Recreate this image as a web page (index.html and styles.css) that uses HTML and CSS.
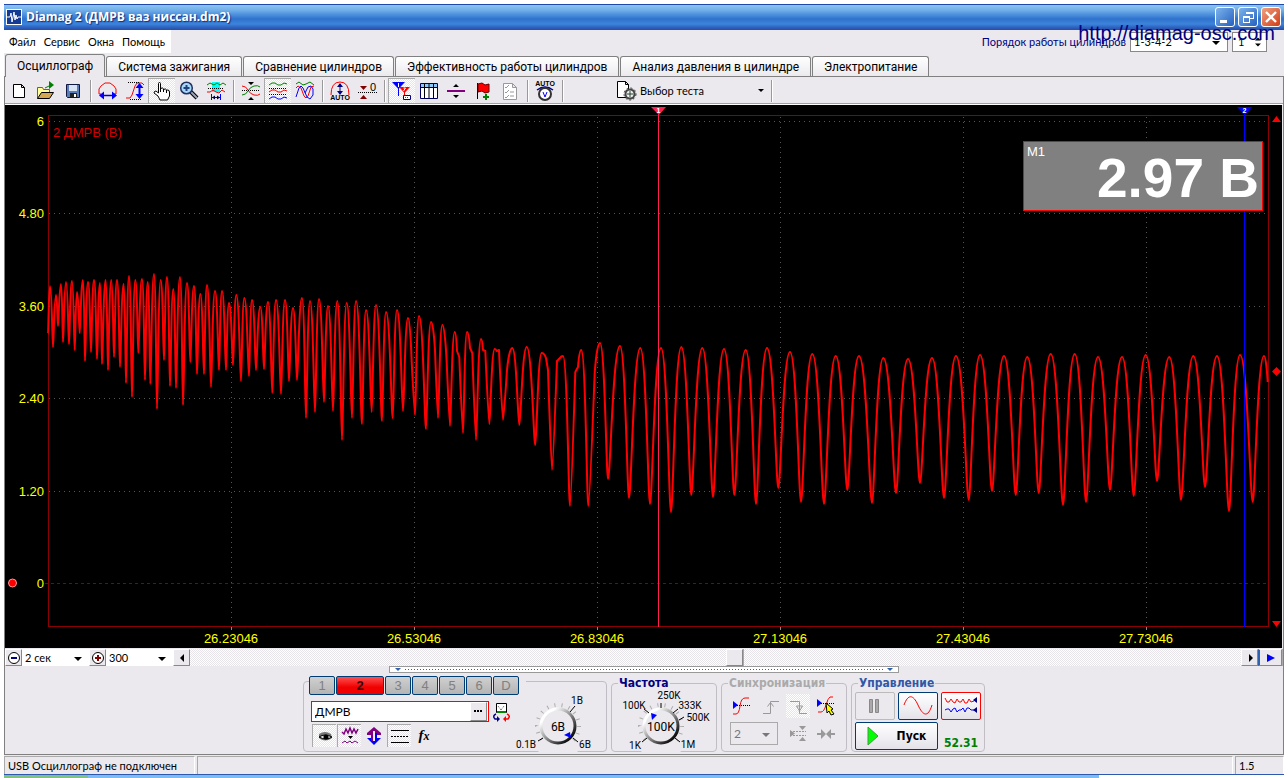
FILE: index.html
```html
<!DOCTYPE html>
<html lang="ru">
<head>
<meta charset="utf-8">
<title>Diamag 2</title>
<link rel="stylesheet" href="styles.css">
</head>
<body>
<div class="window">
  <header class="titlebar">
    <svg class="app-icon" width="16" height="16" viewBox="0 0 16 16"><rect width="16" height="16" fill="#fff"/><rect x="1" y="1" width="14" height="14" fill="#143a94"/><path d="M1 8h3l1-4 1 9 2-10 1 8 1-5 1 4 1-2h3" fill="none" stroke="#fff"/></svg>
    <h1 class="title">Diamag 2 (ДМРВ ваз ниссан.dm2)</h1>
    <div class="win-buttons">
      <button class="win-btn" aria-label="Свернуть"><svg width="18" height="18"><path d="M4 12h7v3H4z" fill="#fff"/></svg></button>
      <button class="win-btn" aria-label="Восстановить"><svg width="18" height="18" fill="none" stroke="#fff" shape-rendering="crispEdges"><path d="M7 6V4h7v6h-3M7 5h7M4.500 8h6v6h-6zM4 9h7"/></svg></button>
      <button class="win-btn close" aria-label="Закрыть"><svg width="18" height="18"><path d="M4 4l10 10M14 4L4 14" stroke="#fff" stroke-width="2.400"/></svg></button>
    </div>
  </header>

  <div class="menu-row">
    <nav class="menu"><button>Файл</button><button>Сервис</button><button>Окна</button><button>Помощь</button></nav>
    <div class="order">
      <label for="order">Порядок работы цилиндров</label>
      <span class="combo order-combo"><select id="order"><option>1-3-4-2</option></select></span>
      <span class="spin"><input aria-label="Номер цилиндра" value="1"><svg width="8" height="14" viewBox="0 0 8 14"><path d="M0 5l4-4 4 4zM0 9h8l-4 4z"/></svg></span>
    </div>
    <a class="watermark" href="#">http://diamag-osc.com</a>
  </div>

  <nav class="tabs">
    <button class="tab active">Осциллограф</button><button class="tab">Система зажигания</button><button class="tab">Сравнение цилиндров</button><button class="tab">Эффективность работы цилиндров</button><button class="tab">Анализ давления в цилиндре</button><button class="tab">Электропитание</button>
  </nav>

  <main class="panel">
    <div class="toolbar">
      <button class="tool" aria-label="Новый"><svg viewBox="0 0 22 22"><path d="M5.500 4.500h8l3 3v10h-11zM13.500 4.500v3h3" fill="#fff" stroke="#000"/></svg></button>
      <button class="tool" aria-label="Открыть"><svg viewBox="0 0 22 22"><path d="M2.500 18.500v-11h5l1 2h6v3" fill="#ffff9c" stroke="#806000"/><path d="M2.500 18.500l4-6h12l-4 6z" fill="#d4a850" stroke="#000"/><path d="M10 8l4-2" stroke="#008000"/><path d="M14 1l5 4-5 4z" fill="#008000"/></svg></button>
      <button class="tool" aria-label="Сохранить"><svg viewBox="0 0 22 22"><path d="M4.500 4.500h13v13h-12l-1-1z" fill="#5a7cb8" stroke="#101840"/><path d="M7 5h8v6H7z" fill="#d8e4f4"/><path d="M8 13h7v4H8z" fill="#222"/><path d="M12 14h2v3h-2z" fill="#fff"/></svg></button>
      <i class="sep"></i>
      <button class="tool" aria-label="Масштаб по времени"><svg viewBox="0 0 22 22" fill="none"><path d="M4 16V14H2V9l2-3 4-3h5l4 3 2 3v5h-2v2" stroke="#f00"/><path d="M4 15.500h14" stroke="#00c" stroke-width="1.500"/><path d="M2 15.500l5-4v8zM20 15.500l-5-4v8z" fill="#00f"/></svg></button>
      <button class="tool" aria-label="Масштаб по амплитуде"><svg viewBox="0 0 22 22" fill="none"><path d="M2 18h4l2-3 3-9 2-3h5l2 2" stroke="#f00"/><path d="M4 2.500h12M6 19.500h12" stroke="#000" stroke-dasharray="1 1"/><path d="M15.500 5v12" stroke="#00f" stroke-width="2"/><path d="M15.500 3l4 5h-8zM15.500 19l4-5h-8z" fill="#00f"/></svg></button>
      <button class="tool pressed" aria-label="Рука"><svg viewBox="0 0 22 22"><path d="M7.500 11V3.500q0-1 1-1t1 1V9q0-1 2-1 1 0 1 2 0-1 2-1 1 0 1 2 0-1 1-1 2 0 2 2v4l-2 4H9l-2-4-4-3q0-2 2-2l2.500 2zM9.500 9v3M12.500 9v3M15.500 10v3" fill="#fff" stroke="#000"/></svg></button>
      <button class="tool" aria-label="Лупа"><svg viewBox="0 0 22 22"><path d="M13 12l6 6" stroke="#000" stroke-width="4"/><path d="M13 12l6 6" stroke="#9aa4b8" stroke-width="2"/><circle cx="8.500" cy="8" r="5.800" fill="#a8d8f8" stroke="#203060" stroke-width="1.500"/><path d="M5.500 8h6M8.500 5v6" stroke="#204080" stroke-width="2"/></svg></button>
      <button class="tool" aria-label="Выделение"><svg viewBox="0 0 22 22" fill="none"><path d="M7 2h8v10H7z" fill="#0ff"/><path d="M2 5l3-2 4 2 3-2 3 2 3-2 3 2" stroke="#008000"/><path d="M3 8.500h16" stroke="#000" stroke-dasharray="1 1"/><path d="M2 12h3l3-2 3 2 3 1 3-3 3 2" stroke="#f00"/><path d="M7 17.500h8M6.500 14v6M15.500 14v6" stroke="#00f"/><path d="M7 17.500l3-2v4zM15 17.500l-3-2v4z" fill="#004"/></svg></button>
      <i class="sep"></i>
      <button class="tool" aria-label="Совместить"><svg viewBox="0 0 22 22" fill="none"><path d="M2 6q4 0 6 4t6 5 6-1" stroke="#f00"/><path d="M2 15q4 0 6-4t6-5 6 1" stroke="#008000"/><path d="M2 10.500h18" stroke="#000" stroke-dasharray="1 1"/><path d="M8 2h6l-3 3zM8 20h6l-3-3z" fill="#000"/></svg></button>
      <button class="tool pressed" aria-label="Раздельно"><svg viewBox="0 0 22 22" fill="none"><path d="M2 5l3-2h3l3 2h3l3-2 3 1" stroke="#008000"/><path d="M2 8.500h18M2 14.500h18" stroke="#000" stroke-dasharray="1 1"/><path d="M2 12l3-2h3l3 2h3l3-2 3 1" stroke="#f00"/><path d="M2 19l3-2h3l3 2h3l3-2 3 1" stroke="#00f"/></svg></button>
      <button class="tool" aria-label="Наложение"><svg viewBox="0 0 22 22" fill="none"><path d="M2 4l3-2 4 3 3-1 4-2 4 3" stroke="#008000"/><path d="M2 17l3-9 2-2 2 2 4 9 3 2 3-4V9l-2-3-3 1-3 6" stroke="#00f"/><path d="M2 8l2-2 3 2 3 8 2 2 2-2 3-9 3-1" stroke="#f00"/></svg></button>
      <i class="sep"></i>
      <button class="tool" aria-label="Авто"><svg viewBox="0 0 22 22" fill="none"><path d="M2 15q0-13 9-13t9 13" stroke="#f00"/><path d="M11 4v9" stroke="#000080"/><path d="M8 7l3-4 3 4zM8 11l3 4 3-4z" fill="#000080"/><text x="11" y="20" class="mini">AUTO</text></svg></button>
      <button class="tool" aria-label="Ноль"><svg viewBox="0 0 22 22"><path d="M4 6h7l-3.500 4zM4 19h7l-3.500-4z" fill="#800000"/><path d="M2 12.500h19" stroke="#000" stroke-dasharray="1 1"/><text x="17" y="11" class="zero">0</text></svg></button>
      <i class="sep"></i>
      <button class="tool pressed" aria-label="Маркеры"><svg viewBox="0 0 22 22"><path d="M1 2h13l-6.500 7zM7 7h1v9H7z" fill="#00f"/><path d="M8 7h11l-5.500 6zM13 12h1v7h-1z" fill="#f00"/><path d="M7.500 3v4M12.500 8h2l-2 3" stroke="#fff" fill="none"/><path d="M12.500 15.500h7v4h-7z" fill="#fff" stroke="#000080"/><path d="M14 17.500h4" stroke="#44a" stroke-dasharray="1 1"/></svg></button>
      <button class="tool" aria-label="Таблица"><svg viewBox="0 0 22 22"><path d="M2.500 3.500h17v15h-17z" fill="#fff" stroke="#000060"/><path d="M3 4h16v3H3z" fill="#8cc8f8"/><path d="M3 7.500h16M6.500 4v14M11 4v14M15.500 4v14" stroke="#000"/></svg></button>
      <button class="tool" aria-label="Уровень"><svg viewBox="0 0 22 22"><path d="M2 10h18v2H2z" fill="#800080"/><path d="M8 7l3-3 3 3zM8 15h6l-3 3z"/></svg></button>
      <button class="tool" aria-label="Добавить метку"><svg viewBox="0 0 22 22"><path d="M5.500 3v16" stroke="#000"/><path d="M6 4l4-1 3 2 4-1v8l-4 1-3-2-4 1z" fill="#f00" stroke="#600"/><path d="M11 17h6M14 14v6" stroke="#008000" stroke-width="2"/></svg></button>
      <button class="tool" aria-label="Список"><svg viewBox="0 0 22 22" fill="none" stroke="#999"><path d="M4.500 3.500h9l4 4v12h-13zM13.500 3.500v4h4" fill="#fff"/><path d="M6 7l1 1 3-3M6 12l1 1 3-3M6 17l1 1 3-3M11 12h4M11 16h4"/></svg></button>
      <i class="sep"></i>
      <button class="tool" aria-label="Авто напряжение"><svg viewBox="0 0 22 22"><text x="11" y="6" class="mini">AUTO</text><path d="M3 10q8-6 16 0" fill="none" stroke="#008" stroke-width="1.500"/><circle cx="11" cy="14" r="6" fill="#fff" stroke="#333" stroke-width="2"/><path d="M9 12l2 5 2-5" fill="none" stroke="#00f"/></svg></button>
      <i class="sep"></i>
      <button class="test-select"><svg width="21" height="21" viewBox="0 0 21 21"><path d="M1.500 1.500h8l3 3v13h-11zM9.500 1.500v3h3" fill="#fff" stroke="#000"/><circle cx="14" cy="14" r="4.500" fill="#eee" stroke="#444" stroke-width="2"/><circle cx="14" cy="14" r="6" fill="none" stroke="#333" stroke-dasharray="2 2"/><path d="M11 14h6M14 11v6" stroke="#243"/></svg><span>Выбор теста</span><svg width="6" height="4"><path d="M0 0h6L3 3z"/></svg></button>
      <i class="sep"></i>
    </div>

    <section class="chart">
      <svg class="scope" viewBox="5 105 1277 543" role="img" aria-label="Осциллограмма ДМРВ">
        <rect x="5" y="105" width="1277" height="543" fill="#000"/>
        <g class="grid">
          <path d="M49 121.500H1267M49 213.500H1267M49 306.500H1267M49 398.500H1267M49 491.500H1267"/>
          <path d="M231.500 117V626M414.500 117V626M597.500 117V626M780.500 117V626M963.500 117V626M1146.500 117V626"/>
        </g>
        <path d="M45 583.500H1267" stroke="#8b0000" stroke-dasharray="3 3" shape-rendering="crispEdges"/>
        <path d="M231.500 627v3M414.500 627v3M597.500 627v3M780.500 627v3M963.500 627v3M1146.500 627v3" stroke="#888"/>
        <rect x="48.500" y="115.500" width="1220" height="511" fill="none" stroke="#8b0000"/>
        <path id="trace" class="trace"/>
        <path d="M658.500 114V627" stroke="#ff2050"/>
        <path d="M651 107h15l-7 8z" fill="#ff2050"/>
        <path d="M1244.500 114V627" stroke="#00f"/>
        <path d="M1237 107h15l-7 8z" fill="#00f"/>
        <text x="658.500" y="113" class="marker-no">1</text><text x="1244.500" y="113" class="marker-no">2</text>
        <path d="M1272 122h9l-4.500-6zM1272 621h9l-4.500 6zM1272 371.500l4.500-4.500 4.500 4.500-4.500 4.500z" fill="#f00"/>
        <circle cx="12.500" cy="583" r="4" fill="#f00" stroke="#f99"/>
        <text x="53" y="137" class="channel-name">2 ДМРВ (В)</text>
        <g class="axis y-axis"><text x="44" y="126">6</text><text x="44" y="218">4.80</text><text x="44" y="311">3.60</text><text x="44" y="403">2.40</text><text x="44" y="496">1.20</text><text x="44" y="588">0</text></g>
        <g class="axis x-axis"><text x="231" y="643">26.23046</text><text x="414" y="643">26.53046</text><text x="597" y="643">26.83046</text><text x="780" y="643">27.13046</text><text x="963" y="643">27.43046</text><text x="1146" y="643">27.73046</text></g>
      </svg>
      <div class="readout"><span class="readout-name">М1</span><strong>2.97 В</strong></div>
    </section>

    <div class="scroll-row">
      <button class="mini-btn" aria-label="Уменьшить"><svg width="14" height="14"><circle cx="7" cy="7" r="5.500" fill="#fff" stroke="#000"/><path d="M4 7h6" stroke="#000080" stroke-width="2"/></svg></button>
      <span class="combo flat"><select aria-label="Развертка"><option>2 сек</option></select></span>
      <button class="mini-btn" aria-label="Увеличить"><svg width="14" height="14"><circle cx="7" cy="7" r="5.500" fill="#fff" stroke="#000"/><path d="M4 7h6M7 4v6" stroke="#800000" stroke-width="2"/></svg></button>
      <span class="combo flat"><select aria-label="Масштаб"><option>300</option></select></span>
      <button class="mini-btn" aria-label="Влево"><svg width="14" height="14"><path d="M9 3v8L5 7z"/></svg></button>
      <div class="track"><button class="thumb" aria-label="Позиция"></button></div>
      <button class="mini-btn" aria-label="Вправо"><svg width="14" height="14"><path d="M6 3v8l4-4z"/></svg></button>
      <button class="mini-btn end" aria-label="В конец"><svg width="14" height="14"><path d="M3 3v8l8-4z" fill="#00f"/></svg></button>
    </div>
    <div class="splitter"><i class="tri"></i><span class="dots"></span><i class="tri"></i></div>

    <div class="controls">
      <section class="group channel">
        <div class="channel-main">
          <div class="channels"><button>1</button><button class="on">2</button><button>3</button><button>4</button><button>5</button><button>6</button><button>D</button></div>
          <div class="name-row">
            <span class="name-box"><input aria-label="Датчик" value="ДМРВ"><button class="dots-btn" aria-label="Выбрать"><svg width="9" height="3"><path d="M0 0h2v2H0zM3 0h2v2H3zM6 0h2v2H6z"/></svg></button></span>
            <button class="plain" aria-label="Калибровка"><svg width="20" height="20"><path d="M4.500 1.500h10v9h-10z" fill="#fff" stroke="#000"/><path d="M6 4l3 4M12 4l-3 4" stroke="#555" stroke-dasharray="1 1"/><path d="M5 9h9v2H5z" fill="#080"/><path d="M4 12q-4 2-1 5h3" fill="none" stroke="#000080" stroke-width="1.500"/><path d="M5 14l3 3-3 3z" fill="#000080"/><path d="M15 12q4 2 1 5h-3" fill="none" stroke="#f00" stroke-width="1.500"/><path d="M14 14l-3 3 3 3z" fill="#f00"/></svg></button>
          </div>
          <div class="channel-tools">
            <button class="tool pressed" aria-label="Показать"><svg viewBox="0 0 22 22"><path d="M5 9q6-4 12 0l1 4q-7 5-13 0z" fill="#777"/><path d="M5 12q6-4 13 0-6 4-13 0z" fill="#ddd" stroke="#000"/><circle cx="12" cy="12" r="2.500"/></svg></button>
            <button class="tool pressed" aria-label="Фильтр"><svg viewBox="0 0 22 22" fill="none" stroke="#800080"><path d="M3 7l2 2 2-5 2 4 2-5 2 5 2-4 2 4 2-4" stroke-width="1.500"/><path d="M3 18l3-2 2 2 3-2 2 2 3-2 3 2"/><path d="M9 11h5l-2.500 3z" fill="#000" stroke="none"/></svg></button>
            <button class="tool" aria-label="Смещение"><svg viewBox="0 0 22 22"><path d="M11 2l7 6v2H4V8z" fill="#800080"/><path d="M4 13h14l-7 7z" fill="#00f"/><path d="M8 8h2v8H8z" fill="#800080"/><path d="M12 8h2v8h-2z" fill="#00f"/><path d="M10 6h2v10h-2z" fill="#eee"/></svg></button>
            <button class="tool pressed" aria-label="Линии"><svg viewBox="0 0 22 22" stroke="#000"><path d="M2 5.500h18M2 17.500h18"/><path d="M2 11.500h18" stroke-dasharray="2 1"/></svg></button>
            <button class="tool fx" aria-label="Функция"><i>f<b>x</b></i></button>
          </div>
        </div>
        <svg class="knob" width="88" height="60" viewBox="0 0 88 60"><use href="#dial" x="43" y="34"/><path d="M55 20l5-6M28 46l-5 3M58 46l5 4" stroke="#000"/><path d="M49 43l6-3 1 6z" fill="#00f"/><text x="43" y="39" class="value">6В</text><text x="62" y="12">1В</text><text x="11" y="56">0.1В</text><text x="70" y="56">6В</text></svg>
      </section>

      <fieldset class="group"><legend class="navy">Частота</legend>
        <svg class="knob frequency" width="104" height="58" viewBox="0 0 104 58"><use href="#dial" x="49" y="33"/><path d="M49 15v-5M37 20l-5-4M61 20l5-4M67 27l5-3M35 45l-5 4M63 45l5 4" stroke="#000"/><path d="M39 20l6 2-5 5z" fill="#00f"/><text x="49" y="38" class="value">100K</text><text x="22" y="16">100K</text><text x="57" y="6">250K</text><text x="78" y="16">333K</text><text x="86" y="28">500K</text><text x="23" y="56">1K</text><text x="76" y="55">1M</text></svg>
      </fieldset>

      <fieldset class="group"><legend class="disabled">Синхронизация</legend>
        <div class="sync">
          <button class="tool" aria-label="Синхронизация"><svg viewBox="0 0 22 22" fill="none"><path d="M2 19h3q3 0 4-8t5-8h4" stroke="#f00"/><path d="M2 10.500h18" stroke="#000" stroke-dasharray="1 1"/><path d="M2 6v8l5-4z" fill="#00f"/></svg></button>
          <button class="tool" disabled aria-label="Фронт"><svg viewBox="0 0 22 22" fill="none" stroke="#999"><path d="M4 18.500h7.500v-12H20M8.500 11.500l3-4 3 4"/></svg></button>
          <button class="tool dither" disabled aria-label="Спад"><svg viewBox="0 0 22 22" fill="none" stroke="#999"><path d="M3 6.500h9.500v12H20M12.500 16l-3-5h6z"/></svg></button>
          <button class="tool" aria-label="Ручная"><svg viewBox="0 0 22 22" fill="none"><path d="M3 17h3q3 0 5-7t4-8h3" stroke="#f00"/><path d="M2 8.500h18" stroke="#000" stroke-dasharray="1 1"/><path d="M2 4v8l5-4z" fill="#00f"/><path d="M11 8l7 6-2 1 3 4-3 1-2-4-2 2z" fill="#ff0" stroke="#000"/></svg></button>
          <span class="combo sync-combo"><select disabled aria-label="Канал"><option>2</option></select></span>
          <button class="tool" disabled aria-label="Уровни"><svg viewBox="0 0 22 22"><path d="M3 7v7l5-3.500zM12 3h7l-3.500 4zM12 18h7l-3.500-4z" fill="#999"/><path d="M6 8.500h13M6 12.500h13" stroke="#999" stroke-dasharray="2 1"/></svg></button>
          <button class="tool" disabled aria-label="Сжать"><svg viewBox="0 0 22 22"><path d="M2 10h4V6l5 5-5 5v-4H2zM20 10h-4V6l-5 5 5 5v-4h4z" fill="#999"/></svg></button>
        </div>
      </fieldset>

      <fieldset class="group"><legend class="blue">Управление</legend>
        <div class="run">
          <button class="run-btn off" disabled aria-label="Пауза"><svg width="14" height="16"><path d="M1.500 1.500h3v13h-3zM7.500 1.500h3v13h-3z" fill="#aaa" stroke="#888"/></svg></button>
          <button class="run-btn" aria-label="Синус"><svg width="32" height="22"><path d="M2 10C6-1 11-1 16 10s10 13 14 0" fill="none" stroke="#f00"/></svg></button>
          <button class="run-btn record" aria-label="Запись"><svg width="34" height="22" fill="none"><path d="M1 3l2 4 2 0 2-3 2 3 2 1 2-4 2 3 2 0 2-3 2 4 2 0 2-4 2 3 3-1" stroke="#f00"/><path d="M1 15l2-1 2 0 2 3 2-3 2-1 2 4 2-2 2 0 2-2 2 4 2-4 2 0 2 2h3" stroke="#00f"/><path d="M33 2v6l-4-3zM33 12v6l-4-3z" fill="#000080"/></svg></button>
          <button class="run-btn start"><svg width="12" height="20"><path d="M1 1v18l10-9z" fill="#0f0" stroke="#494"/></svg><span>Пуск</span></button>
          <output class="counter">52.31</output>
        </div>
      </fieldset>
    </div>
  </main>

  <footer class="status"><span>USB Осциллограф не подключен</span><span></span><span>1.5</span></footer>
</div>
<div class="taskbar"><i></i><b></b></div>
<svg class="defs" width="0" height="0"><defs>
  <linearGradient id="rim" x1="0" y1="0" x2="1" y2="1"><stop offset=".2" stop-color="#fff"/><stop offset=".9" stop-color="#000"/></linearGradient>
  <g id="dial"><circle r="21" fill="none" stroke="#aaa" stroke-width="4" stroke-dasharray="1 6.700" pathLength="138.600"/><path d="M0 0L-20 26H20z" fill="#ebe9ed"/><circle r="17" fill="#ebe9ed" stroke="url(#rim)" stroke-width="3"/></g>
</defs></svg>
<script src="trace.js"></script>
</body>
</html>
```
FILE: styles.css
```css
* { box-sizing: border-box; }
body {
  margin: 0;
  padding: 4px 4px 0;
  background: #fff;
  color: #000;
  font: 11px/14px Lato, "Liberation Sans", sans-serif;
}
button, input, select { font: inherit; color: inherit; margin: 0; padding: 0; border: 0; border-radius: 0; background: none; }
button { display: inline-flex; align-items: center; justify-content: center; }
svg { display: block; }
.window { background: #ebe9ed; }
.defs { position: absolute; }

.titlebar {
  display: flex; align-items: center; gap: 4px; height: 26px; padding: 0 3px 0 2px;
  background: linear-gradient(#1d4aa8 0 1px, #8cc4f2 1px, #72b0ea 6px, #4a8edc 11px, #2f72cc 15px, #3c84dc 20px, #2c5cb8 24px, #284ca8);
}
.title { flex: 1; margin: 0; color: #fff; font: bold 12px/18px "Open Sans", "Noto Sans", sans-serif; text-shadow: 1px 1px 1px #103080; white-space: nowrap; }
.win-buttons { display: flex; gap: 3px; }
.win-btn { width: 20px; height: 20px; border: 1px solid #fff; border-radius: 3px; background: linear-gradient(135deg, #7cb4ec, #2460c0); }
.win-btn.close { background: linear-gradient(135deg, #f0a080, #d03c14); }

.menu-row { position: relative; display: flex; justify-content: space-between; height: 24px; }
.menu { display: flex; gap: 8px; height: 23px; padding: 0 6px 0 5px; background: #fff; }
.order { display: flex; align-items: center; gap: 4px; margin-right: 17px; color: #000080; }
.combo { position: relative; display: inline-flex; background: #fff; color: #000; }
.combo select { appearance: none; width: 100%; padding: 0 3px; opacity: 1; }
.combo::after { content: ""; position: absolute; right: 7px; top: 50%; margin-top: -1px; border: 4px solid transparent; border-top-color: currentColor; border-bottom: 0; }
.order-combo, .spin { height: 20px; border: 1px solid #888; }
.order-combo { width: 98px; }
.spin { display: flex; align-items: center; width: 35px; padding: 0 5px; background: #fff; color: #000; }
.spin input { width: 100%; min-width: 0; }
.watermark { position: absolute; right: 9px; top: -9px; color: #000080; font: 20px/24px "Liberation Sans", Arial, sans-serif; text-decoration: none; }

.tabs { display: flex; align-items: flex-end; gap: 1px; height: 22px; padding-left: 1px; }
.tab { height: 20px; padding: 0 11px; border: 1px solid #808080; border-bottom: 0; border-radius: 3px 3px 0 0; background: linear-gradient(#fff, #ebe9ed); font: 12px/16px Roboto, "Liberation Sans", sans-serif; white-space: nowrap; }
.tab.active { position: relative; height: 23px; margin-bottom: -1px; background: #ebe9ed; }

.panel { border: 1px solid #808080; }
.toolbar { display: flex; align-items: center; height: 28px; border-bottom: 1px solid #fff; box-shadow: inset 0 -1px #a0a0a0; }
.tool { width: 27px; height: 25px; }
.tool svg { flex: none; width: 22px; height: 22px; }
.pressed, .dither { background: repeating-conic-gradient(#e6e4e8 0 25%, #fff 0 50%) 0 0 / 2px 2px; }
.pressed { border: solid; border-width: 1px 0 0 1px; border-color: #aaa; }
.sep { width: 8px; height: 22px; border-left: 4px solid transparent; background: linear-gradient(90deg, #999 1px, #fff 1px 2px, transparent 2px) content-box; }
.mini { font: bold 7px/7px "Liberation Sans", sans-serif; text-anchor: middle; fill: #000; }
.zero { font: 11px "Liberation Sans", sans-serif; text-anchor: middle; }
.test-select { width: 201px; gap: 3px; padding-left: 50px; padding-right: 3px; justify-content: flex-start; }
.test-select span { flex: 1; text-align: left; }

.chart { position: relative; margin-right: 1px; }
.scope { width: 100%; height: auto; }
.grid path { stroke: #555; stroke-dasharray: 1 4; shape-rendering: crispEdges; }
.trace { fill: none; stroke: #f00; stroke-width: 2; stroke-linejoin: round; }
.axis text { fill: #ff0; font: 13px "Liberation Sans", Arial, sans-serif; }
.y-axis text { text-anchor: end; }
.x-axis text { text-anchor: middle; }
.channel-name { fill: #d00000; font: 13px "Liberation Sans", Arial, sans-serif; }
.marker-no { fill: #fff; font: bold 7px "Liberation Sans", sans-serif; text-anchor: middle; }
.readout { position: absolute; top: 36px; right: 19px; display: flex; align-items: flex-start; justify-content: space-between; width: 240px; height: 70px; padding: 2px 3px; border: 1px solid #f00; background: #808080; color: #fff; font-family: "Liberation Sans", Arial, sans-serif; }
.readout-name { font-size: 13px; line-height: 16px; }
.readout strong { font-size: 55px; line-height: 68px; white-space: nowrap; }

.scroll-row { display: flex; height: 18px; padding-top: 1px; margin-right: 1px; }
.mini-btn, .thumb { width: 17px; border: 1px solid; border-color: #fff #888 #888 #fff; background: #ebe9ed; box-shadow: 1px 0 #aaa; }
.mini-btn.end { width: 24px; border-left: 2px solid #3060b0; }
.flat { width: 67px; }
.track { display: flex; flex: 1; padding-left: 42%; background: repeating-conic-gradient(#e6e4e8 0 25%, #fff 0 50%) 0 0 / 2px 2px; }
.splitter { display: flex; align-items: center; gap: 4px; width: 510px; height: 7px; margin: 0 auto; padding: 0 5px; border: 1px solid #999; background: #fff; }
.tri { border: 3px solid transparent; border-top-color: #3060b0; border-bottom: 0; }
.dots { flex: 1; height: 1px; background: repeating-linear-gradient(90deg, #3060b0 0 1px, transparent 1px 3px); }

.controls { display: flex; justify-content: center; gap: 4px; padding: 4px 0 2px; }
.group { min-width: 0; height: 75px; margin: 0; padding: 0; border: 1px solid #c0bec4; border-radius: 4px; }
.group legend { margin-left: 6px; padding: 0 1px; font: bold 12px/12px "DejaVu Sans Condensed", sans-serif; }
.navy { color: #000080; }
.disabled { color: #aaa; }
.blue { color: #3058a8; }
.channel { display: flex; width: 304px; height: 71px; margin-top: 4px; padding-left: 5px; }
.channel-main { margin-top: -6px; }
.channels { display: flex; gap: 1px; width: 217px; background: #ebe9ed; }
.channels button { width: 26px; height: 19px; border: 1px solid #003c74; border-radius: 2px; background: linear-gradient(#d0d0d0, #b4b4b4); color: #808080; font: 13px/16px "Liberation Sans", sans-serif; }
.channels .on { width: 48px; background: linear-gradient(#ff5050, #f00000 60%); color: #300; font-weight: bold; }
.name-row { display: flex; gap: 3px; margin: 6px 0 2px 2px; }
.name-box { display: flex; width: 178px; height: 21px; padding: 0 1px 0 3px; border: 1px solid #f00; background: #fff; }
.name-box input { flex: 1; min-width: 0; font-size: 12px; }
.dots-btn { width: 17px; border: 1px solid; border-color: #fff #888 #888 #fff; background: #ebe9ed; }
.channel-tools { display: flex; gap: 1px; padding-left: 3px; }
.channel-tools .tool { width: 24px; height: 23px; }
.fx { font: italic bold 15px/18px "Liberation Serif", serif; }
.fx b { font-size: 12px; }
.knob { overflow: visible; }
.channel .knob { margin: 10px 0 0 -11px; }
.frequency { margin-top: 4px; }
.knob text { font: 10px Roboto, sans-serif; text-anchor: middle; }
.knob .value { font-size: 12px; }
.sync { display: grid; grid-template-columns: repeat(4, 24px); gap: 4px; padding: 5px 8px 0; width: 124px; }
.sync .tool { width: 24px; height: 24px; }
.sync-combo { grid-column: span 2; width: 48px; height: 23px; border: 1px solid #aaa; background: none; color: #777; font-size: 12px; }
.run { display: grid; grid-template-columns: repeat(3, 40px); gap: 2px 3px; padding: 3px; }
.run-btn { height: 28px; border: 1px solid #003c74; border-radius: 2px; background: linear-gradient(#fff, #e4e2e8); }
.run-btn.off { border-color: #bbb; background: none; }
.run-btn.record { border-color: #f00; }
.start { grid-column: span 2; gap: 18px; font: bold 12px/14px "DejaVu Sans Condensed", sans-serif; }
.counter { align-self: end; color: #008000; font: bold 12px/14px "DejaVu Sans Condensed", sans-serif; text-align: center; }

.status { display: grid; grid-template-columns: 191px 1fr 49px; gap: 2px; padding-top: 1px; }
.status span { height: 18px; padding: 2px 3px; border: solid; border-width: 1px 1px 0; border-color: #aaa #fff #fff #aaa; white-space: nowrap; }
.taskbar { display: flex; height: 4px; border-top: 1px solid #2c58b0; }
.taskbar i { width: 84px; background: #80c080; }
.taskbar b { width: 79%; background: #7cbcf0; }
```
FILE: trace.js
```javascript
// Turning points of the signal: [x, y]; a third value of 1 marks a bend between two turning points.
const points = [
  [48,334],[50,286],[53,347],[56,295],[58,326],[61,284],[63,342],[66,282],[69,344],[72,281],[74.7,350],[77,292],[79.7,333],[83,280],[85,361],[88,282],[91,352],[94,280],[97,359],[100,283],[102,364],[105.7,280],[108,370],[111.3,280],[114,357],[117,280],[120,367],[123.7,284],[126,383],[129,276],[132,397],[135.3,280],[138.3,353],[142,279],[145,380],[147.7,282],[150.3,384],[154,274],[157,409],[160.7,280],[164,360],[167,277],[170,386],[173.3,289],[176,388],[180,277],[183,405],[187,283],[190.3,362],[194,286],[197,374],[200.3,294],[204,374],[207,285],[211,387],[215,291],[219,370],[222,291],[226,370],[229,303],[233,365],[236.3,295],[241,381],[244.3,298],[249,376],[252,300],[256,370],[260.3,307],[264,369],[268,302],[272.3,393],[276,300],[281,394],[285,300],[289,381],[293,308],[297,380],[302,298],[306,418],[310,301],[315,412],[319,299],[324,402],[328,306],[333,411],[337.3,301],[342,440],[346.7,303],[352,418],[356,301],[362,424],[366,310],[371.7,412],[376,305],[382,421],[386,312],[392.7,418],[397,310],[403,411],[408,318],[411.7,362,1],[415,415],[419,316],[426,429],[431,322],[435,350,1],[438,418],[442.3,325],[446.7,362,1],[450,426],[454.7,332],[457,351,1],[459.3,357,1],[463,433],[467,332],[470,348,1],[472.3,353,1],[476,440],[481,339],[483,350,1],[485.3,351,1],[489.3,424],[494.7,349],[496.7,351,1],[499,350,1],[503,420],[507,370,1],[512.3,348],[519.3,425],[526.7,347],[535.3,445],[541.7,353],[546,358,1],[548,370,1],[552,470],[557,361,1],[560,358,1],[563,356],[570,506],[575.3,372,1],[578,367,1],[581.3,350],[588.3,506],[594.7,373,1],[600,343],[608,479],[620,346],[629,498],[640.3,348],[650,504],[661,348],[671,512],[681.3,347],[691.3,495],[702.3,348],[713,497],[724,349],[734.3,495],[745.7,350],[756,504],[767,348],[778.3,488],[790,352],[801,502],[812.3,354],[824,504],[835.7,356],[847.3,490],[859,356],[872,503],[883.3,358],[896,493],[908,359],[920,483],[932,358],[944,498],[956,356],[968.7,500],[980,355],[992,491],[1004,356],[1015.7,495],[1027.3,357],[1038.7,493],[1050.7,354],[1063,505],[1074.7,354],[1086,502],[1098,357],[1110,490],[1122,357],[1133.7,496],[1145.7,355],[1157,481],[1169.3,357],[1181,500],[1193.3,356],[1205,487],[1217,356],[1229,511],[1240,355],[1252.7,502],[1264,356],[1267.7,382,1]
];

// Crests are broad and troughs narrow, so the two ends of a curve get unequal handles.
let d = `M${points[0][0]} ${points[0][1]}`;
for (let i = 1; i < points.length; i++) {
  const [x0, y0, bend0] = points[i - 1];
  const [x1, y1, bend1] = points[i];
  const dx = x1 - x0;
  const a = bend0 ? 0 : y0 < y1 ? 0.6 : 0.2;
  const b = bend1 ? 0 : y0 < y1 ? 0.2 : 0.6;
  d += `C${x0 + dx * a} ${y0} ${x1 - dx * b} ${y1} ${x1} ${y1}`;
}
document.getElementById("trace").setAttribute("d", d);
```
